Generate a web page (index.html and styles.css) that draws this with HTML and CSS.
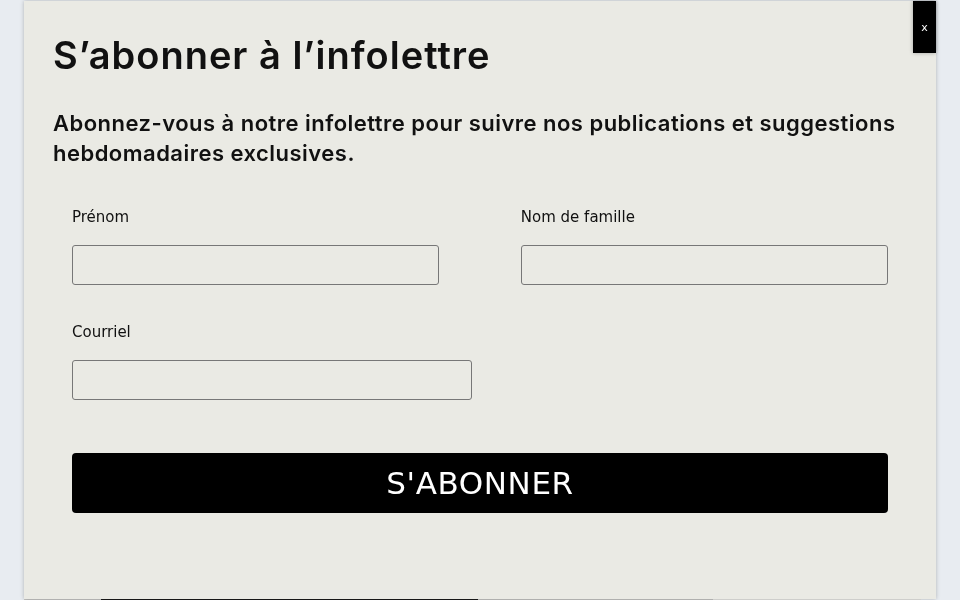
FILE: index.html
```html
<html>

<head>
	<title>S'abonner à l'infolettre</title>
	<link rel="stylesheet" href="styles.css">
</head>

<body>
	<div class="page">
		<div class="behind">
			<span class="b-gray"></span>
			<span class="b-dark"></span>
			<span class="b-mid"></span>
			<span class="b-light"></span>
		</div>
	</div>

	<div class="modal">
		<button class="close" type="button">x</button>
		<h1>S’abonner à l’infolettre</h1>
		<p class="intro">Abonnez-vous à notre infolettre pour suivre nos publications et suggestions hebdomadaires exclusives.</p>
		<form class="form">
			<div class="row">
				<label class="field half">
					<span>Prénom</span>
					<input type="text">
				</label>
				<label class="field half">
					<span>Nom de famille</span>
					<input type="text">
				</label>
			</div>
			<div class="row">
				<label class="field mail">
					<span>Courriel</span>
					<input type="email">
				</label>
			</div>
			<button class="submit" type="button">S'ABONNER</button>
		</form>
	</div>
</body>

</html>
```

FILE: styles.css
```css
body { margin: 0; background: #e8ecf1; font-family: "DejaVu Sans", sans-serif; color: #111; }

.page { height: 600px; display: flex; flex-direction: column; justify-content: flex-end; }
.behind { display: flex; height: 1px; padding-left: 24px; width: 897px; }
.behind span { display: block; height: 1px; }
.b-gray { width: 77px; background: #c6c6c4; }
.b-dark { width: 377px; background: #1a1a1a; }
.b-mid { width: 235px; background: #c4c4c2; }
.b-light { width: 208px; background: #e6e6e2; }

.modal { position: fixed; top: 1px; left: 24px; width: 912px; height: 598px; box-sizing: border-box; padding: 29px 29px 0; background: #eaeae4; box-shadow: 0 0 4px rgba(0,0,0,.25); }
.close { position: absolute; top: 0; right: 0; width: 23px; height: 52px; border: 0; padding: 0; background: #000; color: #fff; font-family: "DejaVu Sans", sans-serif; font-size: 11px; cursor: pointer; box-shadow: 0 0 4px rgba(0,0,0,.3); }

h1 { margin: 0; font-family: Inter, sans-serif; font-weight: 600; font-size: 38px; line-height: 50px; letter-spacing: 1px; }
.intro { margin: 28px 0 0; font-family: Inter, sans-serif; font-weight: 600; font-size: 22px; line-height: 30px; letter-spacing: 0.48px; }

.form { margin: 39px 19px 0; }
.row { display: flex; justify-content: space-between; margin-bottom: 37px; }
.field { display: flex; flex-direction: column; gap: 18px; font-size: 15px; line-height: 20px; }
.field.half { width: 45%; }
.field.mail { width: 400px; }
.field input { height: 40px; box-sizing: border-box; border: 1px solid #777; border-radius: 3px; background: transparent; font: inherit; padding: 0 10px; }

.submit { display: block; width: 100%; height: 60px; margin-top: 53px; border: 0; border-radius: 4px; background: #000; color: #fff; font-family: "DejaVu Sans", sans-serif; font-size: 31px; letter-spacing: 0.6px; cursor: pointer; }
```
